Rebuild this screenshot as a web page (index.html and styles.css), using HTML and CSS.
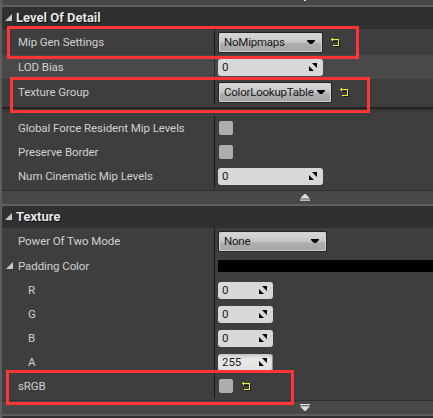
FILE: index.html
```html
<!DOCTYPE html>
<html lang="en">
<head>
<meta charset="utf-8">
<title>Details</title>
<link rel="stylesheet" href="styles.css">
</head>
<body>
<svg class="defs" width="0" height="0">
  <symbol id="drag" viewBox="0 0 8 8"><path d="M3 0h5v5zM0 3l5 5H0z"/></symbol>
  <symbol id="caret" viewBox="0 0 8 4"><path d="M0 0h8v1L5 4H3L0 1z"/></symbol>
  <symbol id="tri" viewBox="0 0 7 7"><path d="M7 0v7H0z"/></symbol>
  <symbol id="reset" viewBox="0 0 9 9"><path fill="#1c1c10" d="M3 8h5V2h1v7H3zM2 3h5v1H2z"/><path fill="#f0f03c" d="M0 1h1V0h1v1h6v7H2V7h5V2H2v1H1V2H0z"/></symbol>
</svg>
<main class="panel">
  <div class="strip"></div>
  <section class="category">
    <h2 class="head"><svg class="tri"><use href="#tri"/></svg><span>Level Of Detail</span></h2>
    <div class="row tall"><div class="label">Mip Gen Settings</div><div class="value"><div class="combo mip"><span>NoMipmaps</span><svg class="caret"><use href="#caret"/></svg></div><svg class="reset"><use href="#reset"/></svg></div></div>
    <div class="row hover"><div class="label">LOD Bias</div><div class="value"><div class="num wide"><span>0</span><svg class="drag"><use href="#drag"/></svg></div></div></div>
    <div class="row tall"><div class="label">Texture Group</div><div class="value"><div class="combo group"><span>ColorLookupTable</span><svg class="caret"><use href="#caret"/></svg></div><svg class="reset"><use href="#reset"/></svg></div></div>
    <div class="divider"></div>
    <div class="row"><div class="label">Global Force Resident Mip Levels</div><div class="value"><i class="check"></i></div></div>
    <div class="row"><div class="label">Preserve Border</div><div class="value"><i class="check"></i></div></div>
    <div class="row"><div class="label">Num Cinematic Mip Levels</div><div class="value"><div class="num wide"><span>0</span><svg class="drag"><use href="#drag"/></svg></div></div></div>
    <div class="foot"><svg width="10" height="7" viewBox="0 0 10 7"><path d="M4.5 0h1L10 4.5H0zM0 5.5h10v1.3H0z"/></svg></div>
  </section>
  <section class="category">
    <h2 class="head"><svg class="tri"><use href="#tri"/></svg><span>Texture</span></h2>
    <div class="row tall"><div class="label">Power Of Two Mode</div><div class="value"><div class="combo none"><span>None</span><svg class="caret"><use href="#caret"/></svg></div></div></div>
    <div class="row"><div class="label open"><svg class="tri"><use href="#tri"/></svg>Padding Color</div><div class="value"><div class="swatch"></div></div></div>
    <div class="row"><div class="label sub">R</div><div class="value"><div class="num"><span>0</span><svg class="drag"><use href="#drag"/></svg></div></div></div>
    <div class="row"><div class="label sub">G</div><div class="value"><div class="num"><span>0</span><svg class="drag"><use href="#drag"/></svg></div></div></div>
    <div class="row"><div class="label sub">B</div><div class="value"><div class="num"><span>0</span><svg class="drag"><use href="#drag"/></svg></div></div></div>
    <div class="row"><div class="label sub">A</div><div class="value"><div class="num full"><span>255</span><svg class="drag"><use href="#drag"/></svg></div></div></div>
    <div class="row"><div class="label">sRGB</div><div class="value"><i class="check"></i><svg class="reset"><use href="#reset"/></svg></div></div>
    <div class="foot"><svg width="10" height="7" viewBox="0 0 10 7"><path d="M0 0h10v1.3H0zM0 2.3h10L5.5 7h-1z"/></svg></div>
  </section>
  <div class="next"></div>
</main>
<div class="mark mark-mip"></div>
<div class="mark mark-group"></div>
<div class="mark mark-srgb"></div>
</body>
</html>
```
FILE: styles.css
```css
* { box-sizing: border-box; }
body {
  margin: 0;
  width: 433px;
  height: 418px;
  overflow: hidden;
  position: relative;
  background: #5e5e5e;
  color: #d0d0d0;
  font: 11.5px/16px Roboto, "Liberation Sans", sans-serif;
  letter-spacing: -0.08px;
}
svg { display: block; flex: none; }
.defs { position: absolute; }
.panel { padding-left: 2px; }
.strip {
  height: 5px;
  margin-bottom: 2px;
  background: linear-gradient(#e0e0e0, #e0e0e0) 302px 0 / 2px 1px no-repeat #484848;
  border-bottom-left-radius: 3px;
}
.category {
  margin-bottom: 2px;
  background: #3e3e3e;
  border-radius: 3px 0 0 3px;
  overflow: hidden;
}
.head {
  display: flex;
  align-items: center;
  height: 22px;
  margin: 0;
  padding-left: 3px;
  background: #303030;
  color: #e6e6e6;
  font-size: 13px;
  font-weight: 700;
  letter-spacing: 0;
  text-shadow: 1px 1px 0 #080808;
}
.tri { width: 7px; height: 7px; fill: #c8c8c8; }
.head .tri { margin: 0 4px 2px 0; }
.row { display: flex; height: 24px; }
.tall { height: 26px; }
.hover { background: #494949; }
.label {
  display: flex;
  align-items: center;
  width: 213px;
  padding-left: 16px;
  border-right: 1px solid #181818;
  white-space: nowrap;
}
.hover .label { border-color: #282828; }
.open { padding-left: 4px; }
.open .tri { margin: 0 5px 2px 0; }
.sub { padding-left: 26px; }
.value { display: flex; flex: 1; align-items: center; padding-left: 3px; color: #181818; }
.combo {
  display: flex;
  align-items: center;
  justify-content: space-between;
  height: 21px;
  padding: 0 7px 0 5px;
  border: 1px solid #242424;
  border-radius: 2px;
  background: linear-gradient(#d8d8d8, #c8c8c8 45%, #adadad 60%, #a6a6a6);
  box-shadow: inset 0 0 0 1px #d0d0d0;
}
.combo span { letter-spacing: -0.22px; }
.mip { width: 105px; }
.group { width: 114px; }
.none { width: 109px; }
.caret { width: 8px; height: 4px; }
.group .caret { margin-right: -1px; }
.reset { width: 9px; height: 9px; margin-left: 8px; }
.num {
  display: flex;
  align-items: center;
  justify-content: space-between;
  width: 55px;
  height: 17px;
  padding: 0 6px 0 4px;
  border-radius: 3px;
  background: #d8d8d8;
}
.wide { width: 105px; }
.full { background: linear-gradient(#c8c8c8, #e8e8e8 30%, #e0e0e0); box-shadow: inset -1px 0 1px #888; }
.drag { width: 8px; height: 8px; }
.check { width: 14px; height: 14px; margin-left: 1px; border-radius: 2px; background: #adadad; }
.check + .reset { margin-left: 9px; }
.swatch { flex: 1; height: 12px; background: #000; }
.divider {
  height: 11px;
  background: linear-gradient(#3e3e3e 2px, #242424 2px, #242424 4px, #343434 4px, #3e3e3e 8px);
}
.foot {
  height: 16px;
  padding: 6px 0 0 298px;
  background: linear-gradient(#3e3e3e 2px, #303030 2px, #303030 3px, #484848 3px);
  fill: #dedede;
}
.next { height: 2px; background: #303030; border-top-left-radius: 2px; }
.mark { position: absolute; border: 3px solid #ff3636; }
.mark-mip { left: 7px; top: 26px; width: 352px; height: 33px; }
.mark-group { left: 10px; top: 77px; width: 360px; height: 36px; }
.mark-srgb { left: 6px; top: 370px; width: 288px; height: 35px; }
```
